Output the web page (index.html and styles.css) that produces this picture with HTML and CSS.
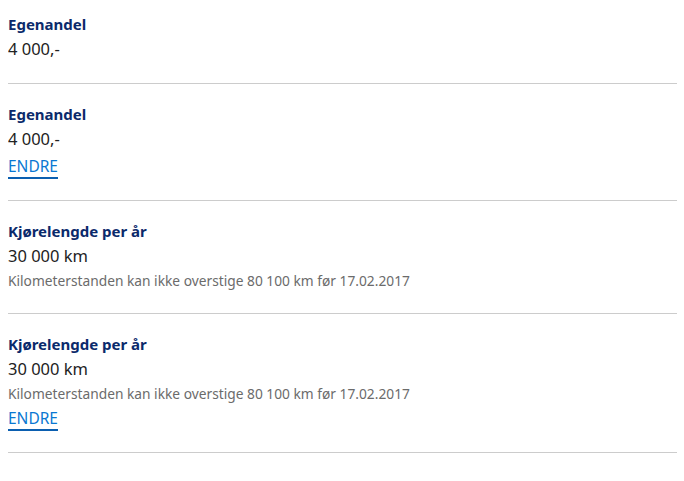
FILE: index.html
```html
<!DOCTYPE html>
<html lang="no">
<head>
<meta charset="utf-8">
<link rel="stylesheet" href="styles.css">
</head>
<body>
<div class="list">
  <section class="item first">
    <div class="label">Egenandel</div>
    <div class="value">4 000,-</div>
  </section>
  <section class="item">
    <div class="label">Egenandel</div>
    <div class="value">4 000,-</div>
    <a class="link" href="#">ENDRE</a>
  </section>
  <section class="item">
    <div class="label">Kjørelengde per år</div>
    <div class="value">30 000 km</div>
    <div class="note">Kilometerstanden kan ikke overstige 80 100 km før 17.02.2017</div>
  </section>
  <section class="item">
    <div class="label">Kjørelengde per år</div>
    <div class="value">30 000 km</div>
    <div class="note">Kilometerstanden kan ikke overstige 80 100 km før 17.02.2017</div>
    <a class="link" href="#">ENDRE</a>
  </section>
</div>
</body>
</html>
```
FILE: styles.css
```css
html, body {
  background: #ffffff;
}
body {
  margin: 8px 7px 8px 8px;
  font-family: "Noto Sans", sans-serif;
}
.list {
  display: flex;
  flex-direction: column;
}
.item {
  display: flex;
  flex-direction: column;
  align-items: flex-start;
  padding: 18px 0 21px;
  border-bottom: 1px solid #cccccc;
}
.item.first {
  padding-top: 4px;
  padding-bottom: 22px;
}
.label {
  font-size: 15px;
  line-height: 25px;
  font-weight: 700;
  color: #0b2a6b;
}
.value {
  font-size: 16.5px;
  line-height: 24px;
  color: #222222;
}
.note {
  margin: 1px 0 -1px;
  font-size: 13.75px;
  line-height: 24px;
  color: #6b6b6b;
}
.link {
  margin-top: 4px;
  font-size: 15.5px;
  line-height: 22px;
  color: #0a78d2;
  text-decoration: none;
  border-bottom: 2px solid #0b5fb0;
}
.note + .link {
  margin-top: 2px;
}
```
